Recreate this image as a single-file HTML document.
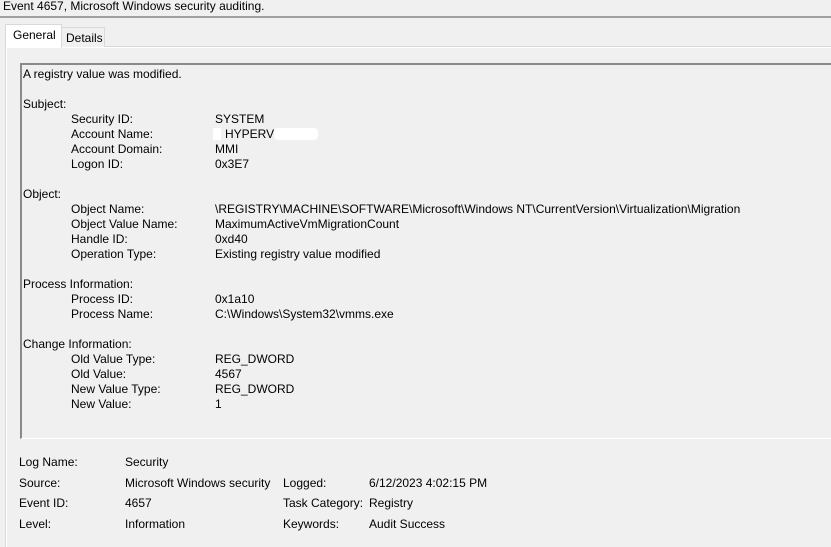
<!DOCTYPE html>
<html><head><style>
body{margin:0;width:831px;height:530px;overflow:hidden;background:#f0f0f0;font-family:"Liberation Sans",sans-serif;font-size:12px;color:#000;position:relative}
.a{position:absolute;white-space:nowrap;line-height:15px}
</style></head><body>
<div class="a" style="left:3px;top:-1px">Event 4657, Microsoft Windows security auditing.</div>
<div style="position:absolute;left:0;top:16px;width:831px;height:2px;background:#a0a0a0"></div>
<div style="position:absolute;left:5px;top:46px;width:830px;height:500px;border-left:1px solid #d9d9d9;border-top:1px solid #d9d9d9;box-shadow:inset 1px 1px 0 #fff"></div>
<div style="position:absolute;left:60px;top:27px;width:43px;height:19px;border:1px solid #d9d9d9;border-bottom:none;background:#f0f0f0"></div>
<div class="a" style="left:66px;top:31px">Details</div>
<div style="position:absolute;left:5px;top:24px;width:55px;height:23px;border:1px solid #d9d9d9;border-bottom:none;background:#fff"></div>
<div class="a" style="left:13px;top:28px">General</div>
<div style="position:absolute;left:20px;top:63px;width:830px;height:373px;border-left:2px solid #8a8a8a;border-top:2px solid #8a8a8a;border-bottom:1px solid #fff;background:#f0f0f0"></div>
<div class="a" style="left:23px;top:67px">A registry value was modified.</div>
<div class="a" style="left:23px;top:97px">Subject:</div>
<div class="a" style="left:71px;top:112px">Security ID:<br>Account Name:<br>Account Domain:<br>Logon ID:</div>
<div class="a" style="left:215px;top:112px">SYSTEM<br>&nbsp;&nbsp;&nbsp;HYPERV<br>MMI<br>0x3E7</div>
<div style="position:absolute;left:274px;top:128px;width:44px;height:12px;background:#fff;border-radius:4px"></div>
<div style="position:absolute;left:213px;top:128px;width:8px;height:12px;background:#fff"></div>
<div class="a" style="left:23px;top:187px">Object:</div>
<div class="a" style="left:71px;top:202px">Object Name:<br>Object Value Name:<br>Handle ID:<br>Operation Type:</div>
<div class="a" style="left:215px;top:202px">\REGISTRY\MACHINE\SOFTWARE\Microsoft\Windows NT\CurrentVersion\Virtualization\Migration<br>MaximumActiveVmMigrationCount<br>0xd40<br>Existing registry value modified</div>
<div class="a" style="left:23px;top:277px">Process Information:</div>
<div class="a" style="left:71px;top:292px">Process ID:<br>Process Name:</div>
<div class="a" style="left:215px;top:292px">0x1a10<br>C:\Windows\System32\vmms.exe</div>
<div class="a" style="left:23px;top:337px">Change Information:</div>
<div class="a" style="left:71px;top:352px">Old Value Type:<br>Old Value:<br>New Value Type:<br>New Value:</div>
<div class="a" style="left:215px;top:352px">REG_DWORD<br>4567<br>REG_DWORD<br>1</div>
<div class="a" style="left:19px;top:452px;line-height:20.7px">Log Name:<br>Source:<br>Event ID:<br>Level:</div>
<div class="a" style="left:125px;top:452px;line-height:20.7px">Security<br>Microsoft Windows security<br>4657<br>Information</div>
<div class="a" style="left:283px;top:472.7px;line-height:20.7px">Logged:<br>Task Category:<br>Keywords:</div>
<div class="a" style="left:369px;top:472.7px;line-height:20.7px">6/12/2023 4:02:15 PM<br>Registry<br>Audit Success</div>
</body></html>
